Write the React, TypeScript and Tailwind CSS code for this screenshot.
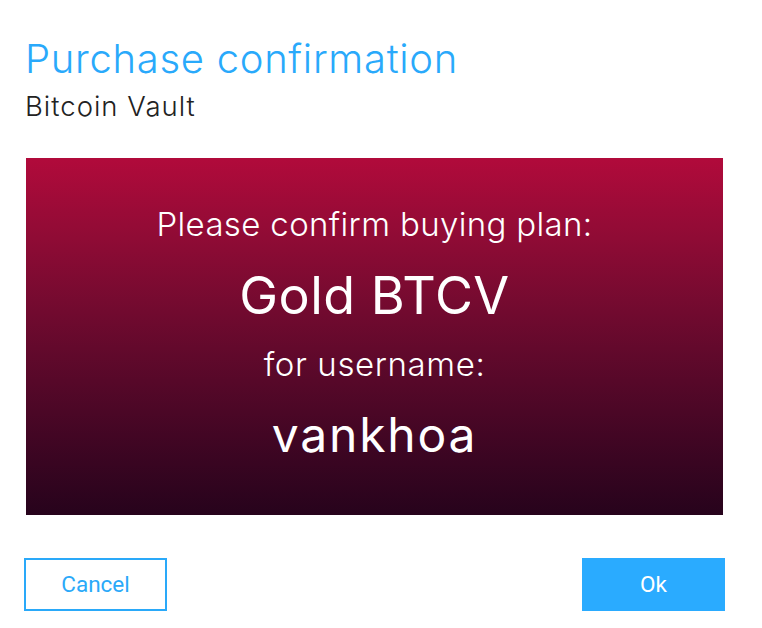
import React from 'react';

export default function App() {
  return (
    <div className="w-[762px] h-[628px] bg-white font-['Inter',sans-serif] overflow-hidden">
      {/* Header */}
      <div className="pl-[25px] pt-[39px]">
        <h1 className="text-[40px] leading-[40px] font-light text-[#29a9fb] tracking-[0.7px]">Purchase confirmation</h1>
        <p className="mt-[14px] text-[27.5px] leading-[27.5px] font-light text-[#222] tracking-[1px]">Bitcoin Vault</p>
      </div>

      {/* Plan panel */}
      <div className="mx-[26px] mt-[37px] w-[697px] h-[357px] bg-gradient-to-b from-[#b10a3b] to-[#27031c] flex flex-col items-center text-white font-light">
        <p className="mt-[50px] text-[33px] leading-[33px] tracking-[0.35px]">Please confirm buying plan:</p>
        <p className="mt-[29px] text-[52px] leading-[52px] font-normal tracking-[0.5px]">Gold BTCV</p>
        <p className="mt-[26px] text-[33px] leading-[33px] tracking-[0.6px]">for username:</p>
        <p className="mt-[30px] text-[48px] leading-[48px] font-normal tracking-[1.8px]">vankhoa</p>
      </div>

      {/* Actions */}
      <div className="flex justify-between pl-[24px] pr-[37px] mt-[43px] font-['Roboto',sans-serif]">
        <button className="w-[143px] h-[53px] border-2 border-[#2aa9f9] text-[#2aa9f9] text-[22.5px] leading-none">Cancel</button>
        <button className="w-[143px] h-[53px] bg-[#2aabff] text-white text-[22.5px] leading-none">Ok</button>
      </div>
    </div>
  );
}
